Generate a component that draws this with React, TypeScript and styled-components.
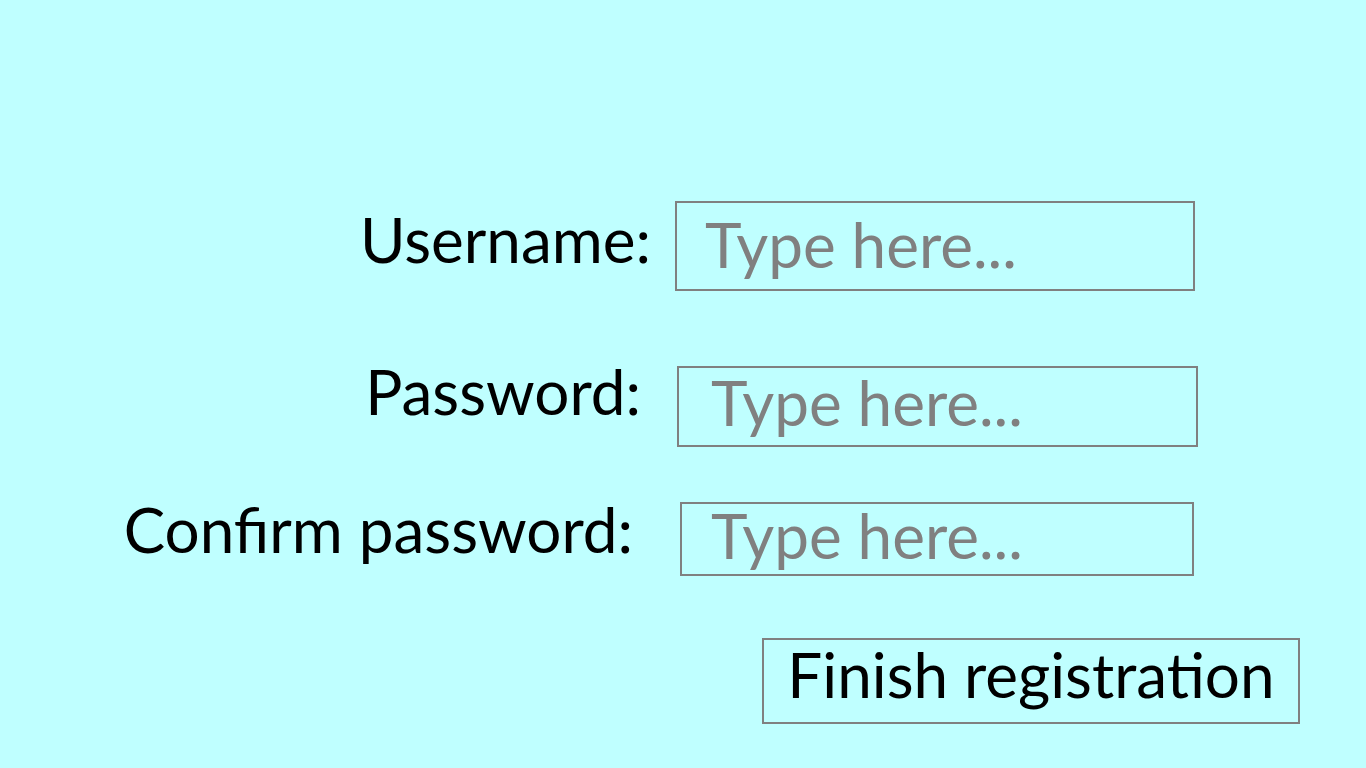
import React from "react";
import styled, { createGlobalStyle } from "styled-components";

const GlobalStyle = createGlobalStyle`
  html, body {
    margin: 0;
    padding: 0;
    background: #bfffff;
  }
  * {
    box-sizing: border-box;
  }
`;

const Page = styled.div`
  width: 1366px;
  height: 768px;
  overflow: hidden;
  background: #bfffff;
  font-family: "Lato", "Liberation Sans", sans-serif;
  padding-top: 201px;
`;

type RowProps = {
  $labelEnd: number;
  $gap: number;
  $top?: number;
};

const Row = styled.div<RowProps>`
  display: flex;
  align-items: flex-start;
  margin-top: ${(p) => p.$top || 0}px;
  padding-left: ${(p) => p.$labelEnd - 560}px;
  gap: ${(p) => p.$gap}px;
`;

const Label = styled.label<{ $shift: number }>`
  width: 560px;
  flex-shrink: 0;
  margin-top: ${(p) => p.$shift}px;
  text-align: right;
  font-size: 62px;
  line-height: 1;
  color: #000;
  white-space: nowrap;
`;

type FieldProps = {
  $width: number;
  $height: number;
  $padTop: number;
  $padLeft: number;
};

// the text line is 62px high, so the bottom padding is what is left of the box
const Field = styled.input<FieldProps>`
  width: ${(p) => p.$width}px;
  height: ${(p) => p.$height}px;
  padding: ${(p) => p.$padTop}px 10px ${(p) => p.$height - 4 - 62 - p.$padTop}px
    ${(p) => p.$padLeft}px;
  border: 2px solid #808080;
  border-radius: 0;
  background: transparent;
  font-family: "Lato", "Liberation Sans", sans-serif;
  font-size: 62px;
  line-height: 62px;
  color: #333;
  outline: none;

  &::placeholder {
    color: #808080;
    opacity: 1;
  }
`;

const SubmitButton = styled.button`
  display: flex;
  align-items: flex-start;
  justify-content: center;
  margin: 62px 0 0 762px;
  width: 538px;
  height: 86px;
  padding: 3px 0 0;
  border: 2px solid #808080;
  border-radius: 0;
  background: transparent;
  font-family: "Lato", "Liberation Sans", sans-serif;
  font-size: 62px;
  line-height: 62px;
  color: #000;
  cursor: pointer;
`;

export default function App() {
  return (
    <>
      <GlobalStyle />
      <Page>
        <Row $labelEnd={651} $gap={24}>
          <Label htmlFor="username" $shift={7}>
            Username:
          </Label>
          <Field
            id="username"
            placeholder="Type here..."
            $width={520}
            $height={90}
            $padTop={10}
            $padLeft={28}
          />
        </Row>
        <Row $labelEnd={641} $gap={36} $top={75}>
          <Label htmlFor="password" $shift={-6}>
            Password:
          </Label>
          <Field
            id="password"
            type="password"
            placeholder="Type here..."
            $width={521}
            $height={81}
            $padTop={3}
            $padLeft={32}
          />
        </Row>
        <Row $labelEnd={633} $gap={47} $top={55}>
          <Label htmlFor="confirm" $shift={-4}>
            Confirm password:
          </Label>
          <Field
            id="confirm"
            type="password"
            placeholder="Type here..."
            $width={514}
            $height={74}
            $padTop={0}
            $padLeft={29}
          />
        </Row>
        <SubmitButton type="button">Finish registration</SubmitButton>
      </Page>
    </>
  );
}
